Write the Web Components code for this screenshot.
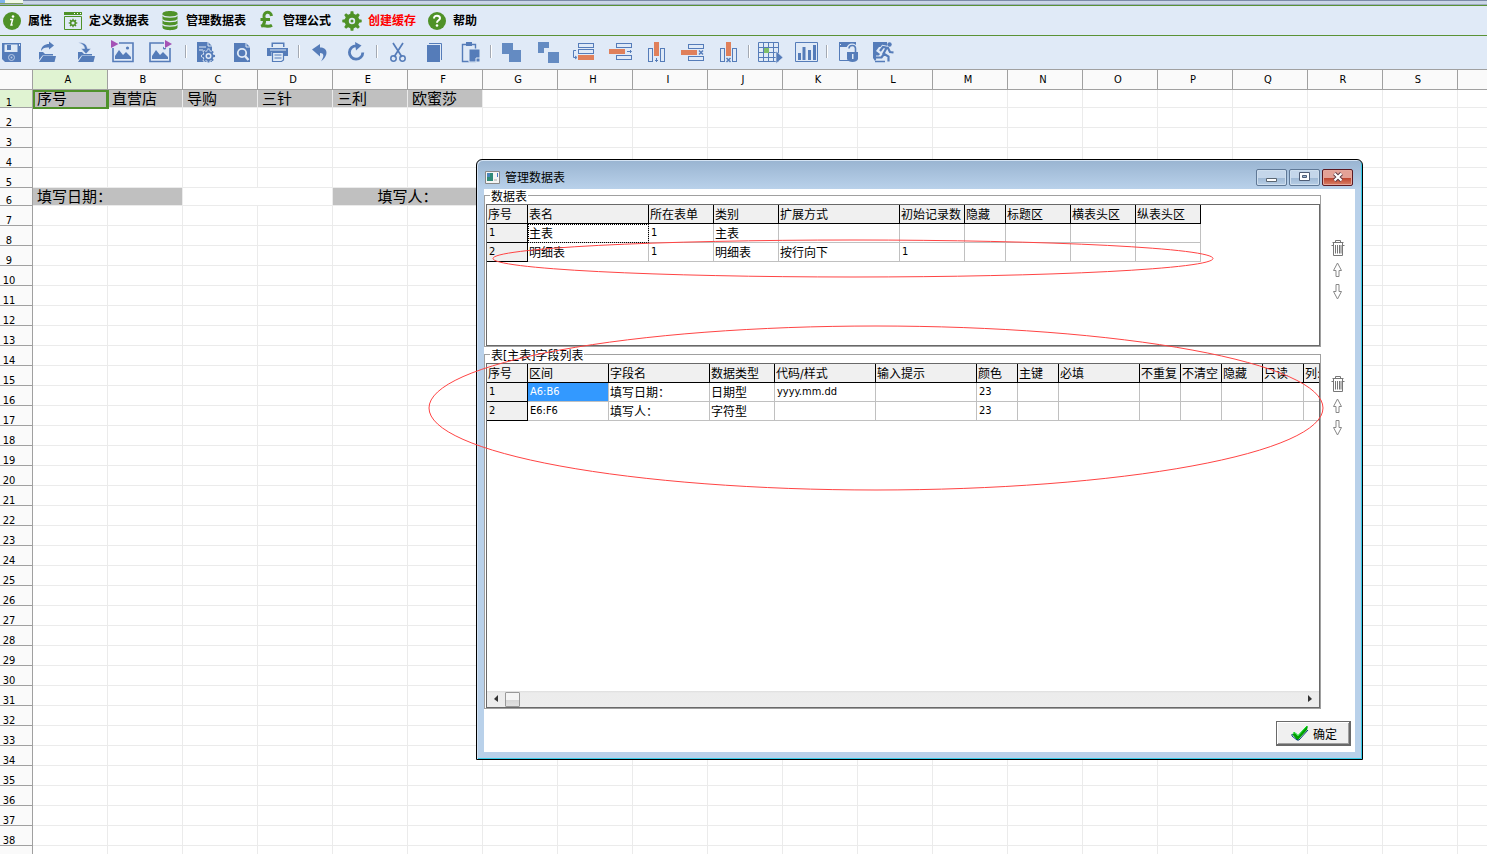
<!DOCTYPE html>
<html lang="zh-CN">
<head>
<meta charset="utf-8">
<title>管理数据表</title>
<style>
html,body{margin:0;height:100%;overflow:hidden;background:#fff}
body{font-family:"DejaVu Sans Condensed","Noto Sans CJK SC",sans-serif;font-size:12px;color:#000}
</style>
</head>
<body>
<report-designer></report-designer>
<script>
const FONT = '"DejaVu Sans Condensed","Noto Sans CJK SC",sans-serif';
const RESET = `*{box-sizing:border-box}button{font:inherit;color:inherit;background:none;border:0;padding:0;margin:0}svg{display:block}`;

function define(name, css, html, setup){
  const tpl = document.createElement('template');
  tpl.innerHTML = `<style>${RESET}${css}</style>${html}`;
  customElements.define(name, class extends HTMLElement{
    constructor(){ super(); this.attachShadow({mode:'open'}).append(tpl.content.cloneNode(true)); }
    connectedCallback(){ if(setup && !this.ready){ this.ready = true; setup(this, this.shadowRoot); } }
  });
}

const gearPath = (cx,cy,r1,r2,n) => {
  let d='';
  for(let i=0;i<n;i++){
    const a=i*2*Math.PI/n, w=Math.PI/n;
    [[r1,-w*.6],[r2,-w*.35],[r2,w*.35],[r1,w*.6]].forEach(([r,o],k)=>{
      d+=(i||k?'L':'M')+(cx+r*Math.sin(a+o)).toFixed(2)+' '+(cy-r*Math.cos(a+o)).toFixed(2);
    });
  }
  return d+'Z';
};

const G='#4f9228', B='#557cb9', L='#e0eaf6', O='#e0805a';
const outline = (x,y,w,h)=>`<rect x="${x+.5}" y="${y+.5}" width="${w-1}" height="${h-1}" fill="none" stroke="${B}"/>`;
const folder = `<path d="M3 20v-8h4l2 2h8v1.500H6.500z" fill="${B}"/><path d="M3 22l4-6h13l-1.500 6z" fill="${B}"/>`;
const picture = `<path d="M2 3h20v18.500H2z" fill="none" stroke="${B}" stroke-width="1.600"/><path d="M4 19v-3l4-6 4 5 3-3 5 5v2z" fill="${B}"/><circle cx="16.500" cy="8" r="1.600" fill="${B}"/>`;
const ICONS = {
  info:`<circle cx="12" cy="12" r="9" fill="${G}"/><circle cx="13" cy="7.500" r="1.300" fill="#fff"/><path d="M10 10.500h2.600l-1.500 5.500h1.600" fill="none" stroke="#fff" stroke-width="1.500"/>`,
  window:`<path d="M3 3h18v3H3z" fill="${G}"/><path d="M13 4h1v1h-1zM16 4h1v1h-1zM19 4h1v1h-1z" fill="#fff"/><path d="M3.500 7.500h17v13h-17z" fill="none" stroke="${G}"/><path fill-rule="evenodd" d="${gearPath(12,14,3.2,4.4,8)}M10.400 14a1.600 1.600 0 1 0 3.200 0a1.600 1.600 0 1 0-3.200 0z" fill="${G}"/>`,
  db:`<path d="M4.500 4.500c0-3.500 15-3.500 15 0v14c0 3.500-15 3.500-15 0z" fill="${G}"/><path d="M4.500 6c1 2.800 14 2.800 15 0M4.500 10.500c1 2.800 14 2.800 15 0M4.500 15c1 2.800 14 2.800 15 0" fill="none" stroke="${L}" stroke-width="1.200"/>`,
  pound:`<path d="M16.500 7C16 2 8.500 2 9 7.500c.5 4 1.500 7-2 9.500M5.500 10.500H15M6 17.200c4-1.500 7 1.500 11-1" fill="none" stroke="${G}" stroke-width="3"/>`,
  gear:`<path fill-rule="evenodd" d="${gearPath(12,12,7.4,9.8,8)}M8.800 12a3.200 3.200 0 1 0 6.400 0a3.200 3.200 0 1 0-6.400 0z" fill="${G}"/><circle cx="12" cy="12" r="1.500" fill="${G}"/>`,
  help:`<circle cx="12" cy="12" r="9" fill="${G}"/><path d="M9 9.500c0-4 6-3.500 6-.3 0 2.200-3 2-3 4.500" fill="none" stroke="#fff" stroke-width="2"/><circle cx="12" cy="16.500" r="1.300" fill="#fff"/>`,
  save:`<path d="M2 3h19v19H5l-3-3z" fill="${B}"/><path d="M4.500 4.500h13V12h-13z" fill="${L}"/><path d="M7 5h4v5H7z" fill="${B}"/><path d="M19 4h1v2h-1z" fill="${L}"/><circle cx="11.500" cy="17.500" r="3" fill="${B}" stroke="#b9cbe6"/><circle cx="11.500" cy="17.500" r="1" fill="#b9cbe6"/>`,
  open:`<g transform="translate(-1 0)">${folder}<path d="M5 11c0-4.500 4-7 8-7V1.500l5 4-5 4V7.500c-4-.5-6 .5-8 3.500z" fill="${B}"/></g>`,
  load:`<g transform="translate(1 0)">${folder}</g><path d="M4 2.500c5-.5 9 1.500 9.500 6h3.500l-5 5.500-5-5.500h3.500c0-3-3-5-6.500-6z" fill="${B}" stroke="${L}" stroke-width=".6"/>`,
  picIn:`${picture}<path d="M0 0h8v8H0z" fill="${L}"/><path d="M0 0l7.500 4L0 8z" fill="#a452b6"/>`,
  picOut:`${picture}<path d="M16 0h8v8h-8z" fill="${L}"/><path d="M17 0l7 4-7 4z" fill="#a452b6"/>`,
  docGear:`<path d="M3 2h11l4 4v16H3z" fill="${B}"/><path d="M14 2v4h4" fill="none" stroke="${L}"/><path d="M5 7h7M5 10h4" stroke="${L}"/><path d="${gearPath(14.500,16,6,7.500,8)}" fill="${L}"/><path fill-rule="evenodd" d="${gearPath(14.500,16,5,6.600,8)}M11.500 16a3 3 0 1 0 6 0a3 3 0 1 0-6 0z" fill="${B}"/><circle cx="14.500" cy="16" r="1.500" fill="${B}"/>`,
  docFind:`<path d="M4 3h12l4 4v15H4z" fill="${B}"/><path d="M16 3v4h4" fill="none" stroke="${L}"/><circle cx="12" cy="13" r="4.200" fill="none" stroke="${L}" stroke-width="1.800"/><path d="M15 16l3.500 4" stroke="${L}" stroke-width="2.400"/>`,
  print:`<path d="M5.500 7V2.500h13V7M1 8h21v8h-4v-4H5.500v4H1z" fill="${B}"/><path d="M7 4h10v3H7z" fill="${L}"/><path d="M2 7.500h19M4 10h16" stroke="${L}"/><path d="M6.500 12.500h11V20l-2 1.500h-9z" fill="${L}" stroke="${B}" stroke-width="1.200"/><path d="M8.500 15h7M8.500 18h7" stroke="${B}" stroke-width="1.200"/>`,
  undo:`<path d="M4 9.500L12 4v3.500c8 0 9 8 1 14 3.500-5.500 3-8.500-1-8.500v3.500z" fill="${B}"/>`,
  redo:`<path d="M12.500 5.800a6.700 6.700 0 1 0 6.300 6.700" fill="none" stroke="${B}" stroke-width="2.800"/><path d="M11 2l6.500 3.500-5.500 5z" fill="${B}"/>`,
  cut:`<path d="M7 3l9 14M17 3L8 17" stroke="${B}" stroke-width="1.700"/><circle cx="7.500" cy="18.500" r="2.700" fill="none" stroke="${B}" stroke-width="1.500"/><circle cx="16.500" cy="18.500" r="2.700" fill="none" stroke="${B}" stroke-width="1.500"/>`,
  copy:`<path d="M5 5h13v17H5z" fill="${B}"/><path d="M7 3.500h12.500V20" fill="none" stroke="${B}"/>`,
  paste:`<path d="M4.500 4.500h13v17h-13z" fill="none" stroke="${B}" stroke-width="1.400"/><path d="M8 2h6v4H8z" fill="${B}"/><path d="M11 9h11v13H11z" fill="${B}" stroke="${L}"/><path d="M18 22v-4h4" fill="none" stroke="${L}"/>`,
  merge:`<path d="M2 3h11v7h8v12H9v-8H2z" fill="#648bc2"/>`,
  split:`<path d="M2 2h11v6H8v5H2zM12 12h11v11H12z" fill="#648bc2"/>`,
  rowTop:`${outline(6,3,16,5)+outline(6,9,16,5)}<path d="M6 15h16v5H6z" fill="${O}"/><path d="M4 10.500H1.500v7H4M3 16l2 1.500L3 19" fill="none" stroke="${B}"/>`,
  rowMid:`${outline(8,3,16,5)+outline(8,15,16,5)}<path d="M1 9h16v5H1z" fill="${O}"/><path d="M19 11.500h4M22 10l1.500 1.500L22 13" fill="none" stroke="${B}"/>`,
  rowDel:`${outline(8,4,16,5)+outline(8,16,16,5)}<path d="M1 10h16v5H1z" fill="${O}"/><path d="M19 10.500l4 4M23 10.500l-4 4" stroke="${B}" stroke-width="1.500"/>`,
  colIns:`${outline(4,8,5,14)+outline(16,8,5,14)}<path d="M10 2h5v14h-5z" fill="${O}"/><path d="M12.500 18v4M11 20.500h3" stroke="${B}"/>`,
  colDel:`${outline(4,8,5,14)+outline(16,8,5,14)}<path d="M10 2h5v14h-5z" fill="${O}"/><path d="M10.500 18l4 4M14.500 18l-4 4" stroke="${B}" stroke-width="1.500"/>`,
  table:`<path d="M.5 2.500h20v19H.5zM.5 7.500h20M.5 12.500h20M.5 17.500h20M5.500 2.500v19M10.500 2.500v19M15.500 2.500v19" fill="none" stroke="${B}"/><path d="M6 8h5v5H6z" fill="#7fbf6a"/><path d="M18 11l7 6.500-7 6z" fill="${B}" stroke="${L}" stroke-width=".6"/>`,
  chart:`<path d="M1.500 2.500h22v19h-22z" fill="none" stroke="${B}"/><path d="M4 13h3v7H4zM8.500 7h3v13h-3zM14 10h3v10h-3zM19 5h3v15h-3z" fill="${B}"/>`,
  lock:`<path d="M3 2h17v5H3z" fill="${B}"/><path d="M3.500 4v16.500H13" fill="none" stroke="${B}"/><path d="M4 4h1v1H4z" fill="${L}"/><path d="M12.500 11V8.500c0-4 7-4 7 0V11" fill="none" stroke="${L}" stroke-width="4"/><path d="M13 8.500c0-4 6.500-4 6.500 0V13" fill="none" stroke="${B}" stroke-width="1.600"/><path d="M11 12h11v7c-1 4-10 4-11 0z" fill="${B}"/><path d="M16 14h1.500v5H16z" fill="${L}"/>`,
  exit:`<path d="M1 2h14v5H7l-3 4 4 3-5 7-2-3z" fill="${B}"/><path d="M8 11l3-4 5 1 2 4 3.500.5M14.500 8l-3 5.500 5 3v5M12 14l-2.500 3.500H4" fill="none" stroke="${L}" stroke-width="4"/><path d="M8 11l3-4 5 1 2 4 3.500.5M14.500 8l-3 5.500 5 3v5M12 14l-2.500 3.500H4" fill="none" stroke="${B}" stroke-width="2.200"/><circle cx="17.500" cy="4.500" r="2.200" fill="${B}"/><path d="M3 21.500h10" stroke="${B}" stroke-width="1.500"/>`,
  trash:`<path d="M6.500 3.500v-2h5v2M3.500 3.500h11M4.500 4v12.500h9V4M2.500 6.500h2M13.500 6.500h2M6.500 6v8.500M8.500 6v8.500M10.500 6v8.500M12 6v8.500" transform="translate(3 3)" fill="none" stroke="#777"/>`,
  up:`<path d="M11.500 4l4 7.500h-2.500v6h-3v-6H7.500z" transform="translate(0 1)" fill="#fff" stroke="#888"/>`,
  down:`<path d="M11.500 19l4-7.500h-2.500v-7h-3v7H7.500z" fill="#fff" stroke="#888"/>`,
  check:`<g transform="translate(0 1)"><path d="M3 12l3-1 3 3 8-9 2-1-1 4-9 10H8z" fill="#00a000"/><path d="M3 12v2l5 4h2l9-10" fill="none" stroke="#003c78"/><path d="M4 11l2-.5 3 3L18 4" fill="none" stroke="#00e020"/></g>`
};

define('ui-icon', `:host{display:block;width:24px;height:24px;flex:none}svg{overflow:visible}`,
  `<svg width="24" height="24" viewBox="0 0 24 24" aria-hidden="true"></svg>`,
  (el,root)=>{ root.querySelector('svg').innerHTML = ICONS[el.getAttribute('name')]; });

const addIcon = (button,name)=>{
  const icon=document.createElement('ui-icon');
  icon.setAttribute('name',name);
  button.prepend(icon);
};

define('menu-action', `:host{display:block}button{display:flex;align-items:center;gap:4px;font-weight:700;line-height:16px;white-space:nowrap}`,
  `<button type="button"><span><slot></slot></span></button>`,
  (el,root)=>addIcon(root.querySelector('button'),el.getAttribute('icon')));

define('tool-button', `:host{display:block}button{display:block}`,
  `<button type="button"></button>`,
  (el,root)=>{ const b=root.querySelector('button'); b.setAttribute('aria-label',el.getAttribute('icon')); addIcon(b,el.getAttribute('icon')); });

define('tool-group', `:host{display:flex;gap:12px}:host([wide]){gap:13px}`, `<slot></slot>`);
define('tool-separator', `:host{display:flex;width:18px;height:13px;justify-content:center}:host([wide]){width:22px;padding-left:6px}i{width:2px;background:#a3a9b3;border-right:1px solid #fff}`, `<i></i>`);

define('top-bars', `
:host{display:block;background:#e0eaf7}
.strip{height:5px;display:flex;background:linear-gradient(#7c8ba8 1px,#cad5e7 1px 4px,#9cabc0 4px)}
.tab{width:23px;height:4px;background:linear-gradient(90deg,#7fb4ea 5px,#f0f8e8 5px);border-bottom:1px solid #7f9f62}
.menu{display:flex;gap:9px;height:31px;border-top:1px solid #5a9235;border-bottom:1px solid #5a9235;align-items:center}
.tools{display:flex;height:34px;align-items:center;padding-bottom:2px;border-bottom:1px solid #a0a0a0}
`, `
<div class="strip"><div class="tab"></div></div>
<nav class="menu">
<menu-action icon="info">属性</menu-action><menu-action icon="window">定义数据表</menu-action><menu-action icon="db">管理数据表</menu-action><menu-action icon="pound">管理公式</menu-action><menu-action icon="gear" style="color:#f00">创建缓存</menu-action><menu-action icon="help">帮助</menu-action>
</nav>
<div class="tools" role="toolbar"></div>`,
(el,root)=>{
  const groups=[['save','open','load','picIn','picOut'],['docGear','docFind','print'],['undo','redo'],['cut','copy','paste'],['merge','split','rowTop','rowMid','colIns','rowDel','colDel'],['table','chart'],['lock','exit']];
  root.querySelector('.tools').innerHTML = groups.map((g,i)=>`<tool-group${i?'':' wide'}>${g.map(n=>`<tool-button icon="${n}"></tool-button>`).join('')}</tool-group>`)
    .reduce((a,b,i)=>a+`<tool-separator${i===1?' wide':''}></tool-separator>`+b);
});

define('sheet-grid', `
:host{display:block;overflow:hidden;background:#fff}
table{border-spacing:0;table-layout:fixed;width:1533px}
th{font-weight:400;font-size:11px;background:#fafafa;border-right:1px solid #a0a0a0;border-bottom:1px solid #a0a0a0;padding:0}
thead th{height:20px;line-height:16px;padding-right:4px}
tbody th{line-height:8px;vertical-align:bottom;text-align:left}
tbody th span{display:block;width:18px;text-align:center}
.on{background:#e0f3d2}
td{border-right:1px solid #ebebeb;border-bottom:1px solid #ebebeb;padding:0 4px;font-size:15px;line-height:16px;white-space:nowrap;overflow:hidden}
tr{height:20px}tr.short{height:18px}
.fill{background:#c0c0c0}.mid{text-align:center}
.sel{position:relative;overflow:visible}
.sel::after{content:"";position:absolute;inset:0 -2px -2px 0;border:2px solid #4f922b;border-right-width:3px}
`, `<table><colgroup></colgroup><thead></thead><tbody></tbody></table>`,
(el,root)=>{
  const cols=[...'ABCDEFGHIJKLMNOPQRS',''];
  root.querySelector('colgroup').innerHTML='<col style="width:33px">'+'<col style="width:75px">'.repeat(cols.length);
  root.querySelector('thead').innerHTML='<tr><th></th>'+cols.map((c,i)=>`<th${i?'':' class="on"'}>${c}</th>`).join('')+'</tr>';
  let out='';
  for(let r=1;r<=39;r++){
    let cells;
    if(r===1) cells=['序号','直营店','导购','三针','三利','欧蜜莎'].map((t,i)=>`<td class="fill${i?'':' sel'}">${t}</td>`).join('')+'<td></td>'.repeat(14);
    else if(r===6) cells='<td class="fill" colspan="2">填写日期：</td><td colspan="2"></td><td class="fill mid" colspan="2">填写人：</td>'+'<td></td>'.repeat(14);
    else cells='<td></td>'.repeat(20);
    out+=`<tr${r===1||r===6?' class="short"':''}><th${r===1?' class="on"':''}><span>${r<39?r:''}</span></th>${cells}</tr>`;
  }
  root.querySelector('tbody').innerHTML=out;
});

const GRIDS={
  tables:{cols:[['序号',41],['表名',121],['所在表单',65],['类别',65],['扩展方式',121],['初始记录数',65],['隐藏',41],['标题区',65],['横表头区',65],['纵表头区',65]],
    rows:[['1','主表','1','主表','','','','','',''],['2','明细表','1','明细表','按行向下','1','','','','']],mark:'focus'},
  fields:{cols:[['序号',41],['区间',81],['字段名',101],['数据类型',65],['代码/样式',101],['输入提示',101],['颜色',41],['主键',41],['必填',81],['不重复',41],['不清空',41],['隐藏',41],['只读',41],['列:',41]],
    rows:[['1','A6:B6','填写日期：','日期型','yyyy.mm.dd','','23','','','','','','',''],['2','E6:F6','填写人：','字符型','','','23','','','','','','','']],mark:'picked'}
};
define('data-grid', `
:host{display:block;overflow:hidden;flex:1}
table{border-spacing:0;table-layout:fixed}
tr{height:19px}
th,td{font-weight:400;text-align:left;padding:0 0 0 2px;line-height:16px;white-space:nowrap;border-right:1px solid #c0c0c0;border-bottom:1px solid #c0c0c0}
td,tbody th{font-size:11px}
th{background:#f0f0f0;border-color:#000}
thead th,td.cn{font-size:12px;padding:2px 0 0 1px}
.focus{outline:1px dotted #000;outline-offset:-1px}
.picked{background:#3399ff;color:#fff}
`, `<table><colgroup></colgroup><thead></thead><tbody></tbody></table>`,
(el,root)=>{
  const g=GRIDS[el.getAttribute('source')];
  root.querySelector('table').style.width=g.cols.reduce((s,c)=>s+c[1],0)+'px';
  root.querySelector('colgroup').innerHTML=g.cols.map(c=>`<col style="width:${c[1]}px">`).join('');
  root.querySelector('thead').innerHTML='<tr>'+g.cols.map(c=>`<th>${c[0]}</th>`).join('')+'</tr>';
  root.querySelector('tbody').innerHTML=g.rows.map((r,i)=>'<tr>'+r.map((t,j)=>{
    const cls=[/[^\x00-\x7f]/.test(t)?'cn':'', i===0&&j===1?g.mark:''].join(' ').trim();
    return j?`<td class="${cls}">${t}</td>`:`<th>${t}</th>`;}).join('')+'</tr>').join('');
});

define('h-scrollbar', `
:host{display:flex;height:16px;align-items:center;background:linear-gradient(#dedede,#ececec 2px,#ededed)}
button{width:18px;height:16px;display:flex;align-items:center;justify-content:center}
.thumb{width:15px;height:15px;border:1px solid #999;border-radius:1px;background:linear-gradient(#f5f5f5 50%,#d6d6d6 50%,#e2e2e2)}
.track{flex:1}
`, `<button type="button" aria-label="向左"><svg width="6" height="8"><path d="M5 0v7L1 4z" fill="#333"/></svg></button><div class="thumb"></div><div class="track"></div><button type="button" aria-label="向右"><svg width="6" height="8"><path d="M1 0v7l4-3z" fill="#333"/></svg></button>`);

define('group-panel', `
:host{display:block;min-width:0}
fieldset{height:100%;margin:0;padding:3px 0 0 1px;min-width:0;border:1px solid #a0a0a0}
legend{margin-left:4px;padding:0 1px;height:12px;line-height:16px;white-space:nowrap}
.frame{height:100%;border:1px solid #696969;display:flex;flex-direction:column}
`, `<fieldset><legend></legend><div class="frame"><slot></slot></div></fieldset>`,
(el,root)=>{ root.querySelector('legend').textContent=el.getAttribute('caption'); });

define('row-actions', `
:host{display:flex;flex-direction:column;align-items:center;gap:4px}
button{height:18px;width:24px;display:flex;align-items:center;justify-content:center}
`, `<button type="button" aria-label="删除"><ui-icon name="trash"></ui-icon></button><button type="button" aria-label="上移"><ui-icon name="up"></ui-icon></button><button type="button" aria-label="下移"><ui-icon name="down"></ui-icon></button>`);

define('table-dialog', `
:host{display:flex;flex-direction:column;border:1px solid #000;border-radius:6px 6px 0 0;background:linear-gradient(#99b4d1,#b9d1ea 29px);box-shadow:inset 1px 1px 0 #d4e3f3,inset -1px -1px 0 #35cbe8;padding:0 7px 7px}
header{height:29px;display:flex;align-items:center;gap:5px;padding:5px 2px 0 1px}
h1{margin:0;font-size:12px;font-weight:400;line-height:16px;flex:1;padding-top:2px}
.win{display:flex;gap:2px}
.win button{width:31px;height:17px;border:1px solid #5f7896;border-radius:2px;box-shadow:inset 0 0 0 1px #cfdfef;background:linear-gradient(#c4d6ea 50%,#9db7d3 50%,#b7cee6);display:flex;align-items:center;justify-content:center}
.win .close{border-color:#5c1a22;box-shadow:inset 0 0 0 1px #e5a79c;background:linear-gradient(#e3a196 50%,#bb3d28 50%,#d98268)}
.body{background:#fff;flex:1;display:grid;grid-template-columns:1fr 34px;grid-template-rows:158px 1fr 42px;row-gap:1px}
.first{padding-top:50px}.second{padding-top:27px}
footer{grid-column:1/3;display:flex;justify-content:flex-end;align-items:flex-start;padding:11px 4px 0 0}
.ok{display:flex;align-items:center;justify-content:center;width:75px;height:25px;background:#f0f0f0;border:1px solid #696969;border-width:1px 2px 2px 1px;box-shadow:inset 1px 1px 0 #fff,inset -1px -1px 0 #a0a0a0;line-height:16px}
.ok span{padding-top:3px}
`, `
<header>
<svg width="15" height="13"><path d="M.5.5h14v12H.5z" fill="#f4f4f4" stroke="#888"/><path d="M2 2h6v8H2z" fill="#2f8a78"/><path d="M2 2h3v4H2z" fill="#4a86b8"/><path d="M12 2h1v4h-1z" fill="#4578c0"/><path d="M9 8h3v2H9z" fill="#d0d0d0"/></svg>
<h1>管理数据表</h1>
<div class="win">
<button type="button" aria-label="最小化"><svg width="12" height="12"><path d="M.5 7.500h10v3H.5z" fill="#fff" stroke="#5a6672"/></svg></button>
<button type="button" aria-label="最大化"><svg width="12" height="10"><path d="M.5.5h10v8H.5z" fill="#fff" stroke="#4f5d75"/><path d="M3.500 3.500h4v2h-4z" fill="#9db7d3" stroke="#4f5d75"/></svg></button>
<button type="button" class="close" aria-label="关闭"><svg width="12" height="10"><path d="M2.500 1.500l7 7M9.500 1.500l-7 7" stroke="#5a3a45" stroke-width="4"/><path d="M2.500 1.500l7 7M9.500 1.500l-7 7" stroke="#fff" stroke-width="2.200"/></svg></button>
</div>
</header>
<div class="body">
<group-panel caption="数据表"><data-grid source="tables"></data-grid></group-panel>
<row-actions class="first"></row-actions>
<group-panel caption="表[主表]字段列表"><data-grid source="fields"></data-grid><h-scrollbar></h-scrollbar></group-panel>
<row-actions class="second"></row-actions>
<footer><button type="button" class="ok"><ui-icon name="check"></ui-icon><span>确定</span></button></footer>
</div>`);

define('report-designer', `
:host{display:flex;flex-direction:column;height:100vh;position:relative;overflow:hidden;font-family:${FONT}}
sheet-grid{flex:1;min-height:0}
table-dialog{position:absolute;left:476px;top:159px;width:887px;height:601px}
.marks{position:absolute;left:428px;top:238px;pointer-events:none}
`, `
<top-bars></top-bars>
<sheet-grid></sheet-grid>
<table-dialog role="dialog"></table-dialog>
<svg class="marks" width="897" height="254" fill="none" stroke="#f44" aria-hidden="true"><ellipse cx="425" cy="20.500" rx="360" ry="18.500"/><ellipse cx="448" cy="170" rx="447" ry="82"/></svg>`);
</script>
</body>
</html>
